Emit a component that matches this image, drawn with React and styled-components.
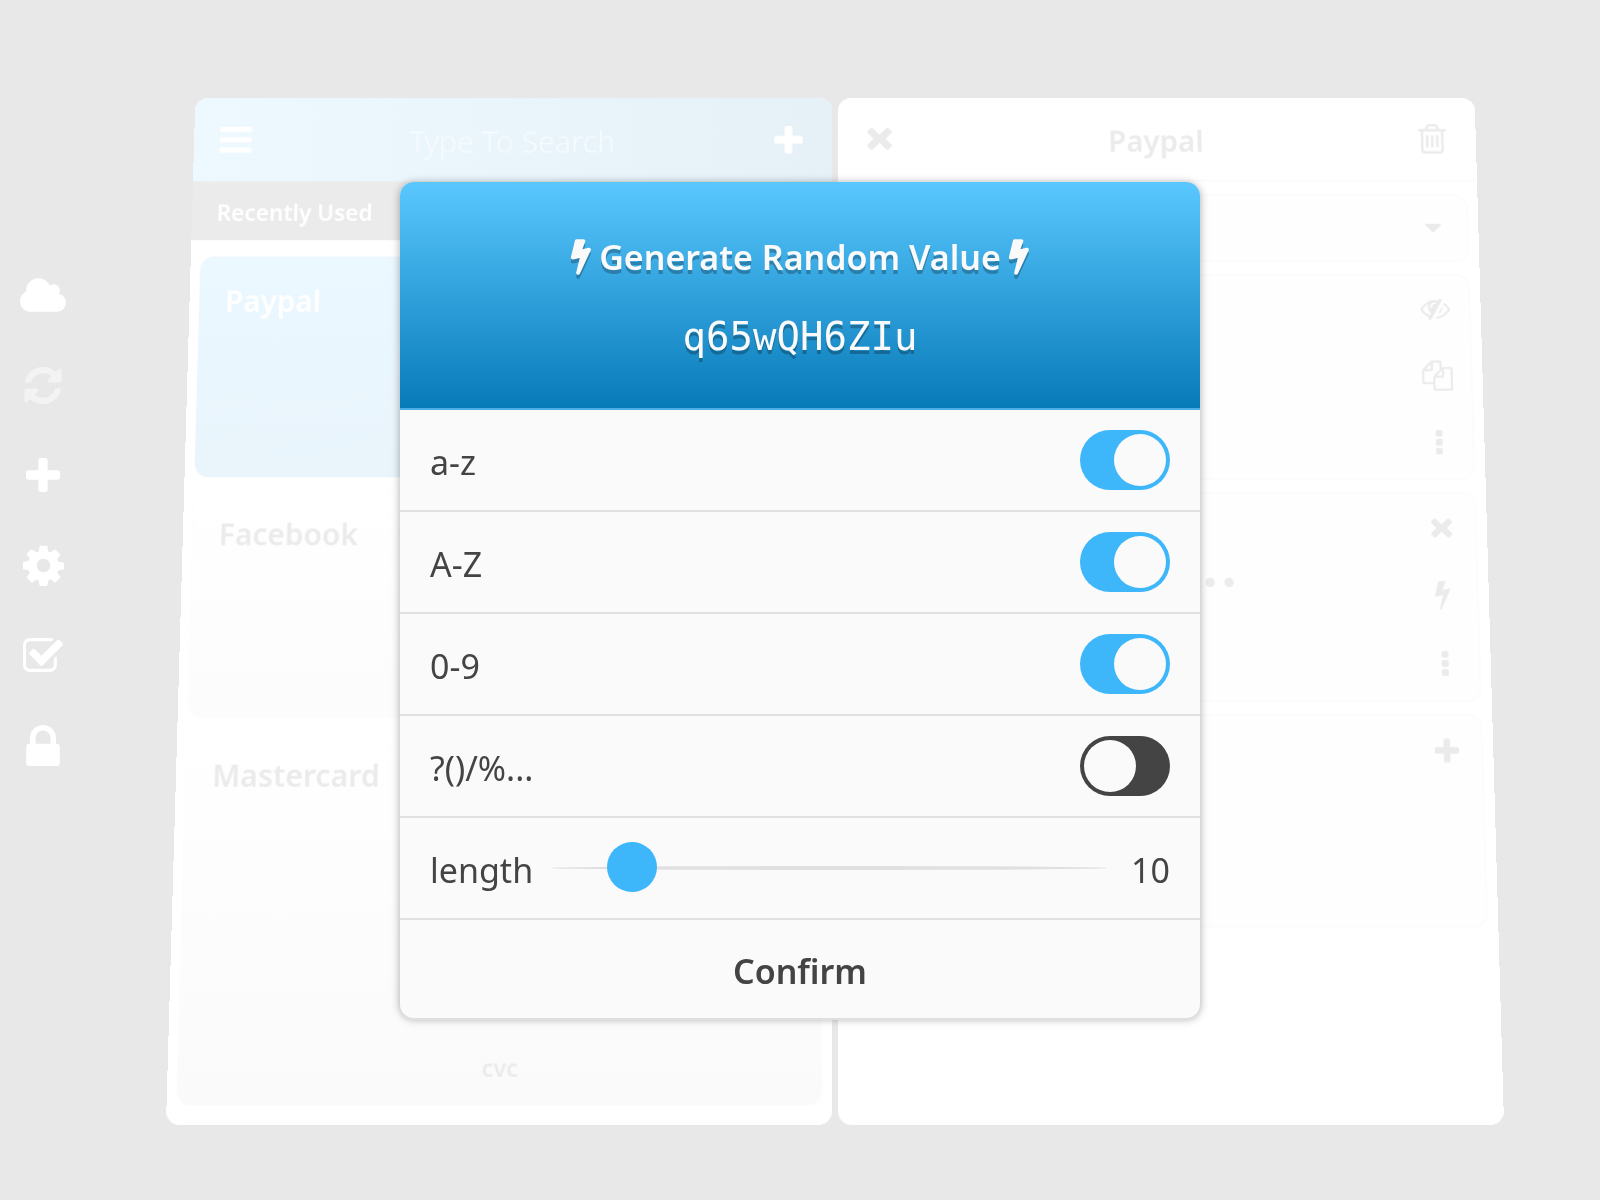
import React, { useState } from 'react';
import styled, { createGlobalStyle } from 'styled-components';

const ICONS = {
  bars: {
    box: '128 256 1536 1280',
    d: 'M1664 1344v128q0 26-19 45t-45 19H192q-26 0-45-19t-19-45v-128q0-26 19-45t45-19h1408q26 0 45 19t19 45zm0-512v128q0 26-19 45t-45 19H192q-26 0-45-19t-19-45V832q0-26 19-45t45-19h1408q26 0 45 19t19 45zm0-512v128q0 26-19 45t-45 19H192q-26 0-45-19t-19-45V320q0-26 19-45t45-19h1408q26 0 45 19t19 45z'
  },
  plus: {
    box: '0 192 1408 1408',
    d: 'M1408 800v192q0 40-28 68t-68 28H896v416q0 40-28 68t-68 28H608q-40 0-68-28t-28-68v-416H96q-40 0-68-28t-28-68V800q0-40 28-68t68-28h416V288q0-40 28-68t68-28h192q40 0 68 28t28 68v416h416q40 0 68 28t28 68z'
  },
  times: {
    box: '10 366 1288 1188',
    d: 'M1298 1322q0 40-28 68l-136 136q-28 28-68 28t-68-28l-344-344-344 344q-28 28-68 28t-68-28L38 1390q-28-28-28-68t28-68l294-294L38 666q-28-28-28-68t28-68l136-136q28-28 68-28t68 28l344 344 344-344q28-28 68-28t68 28l136 136q28 28 28 68t-28 68l-294 294 294 294q28 28 28 68z'
  },
  cloud: {
    box: '64 128 1920 1408',
    d: 'M1984 1152q0 159-112.500 271.500T1600 1536H512q-185 0-316.500-131.500T64 1088q0-132 71-241.500T322 683q-2-28-2-43 0-212 150-362t362-150q158 0 286.500 88T1306 446q70-62 166-62 106 0 181 75t75 181q0 75-41 138 129 30 213 134.500t84 239.500z'
  },
  refresh: {
    box: '128 128 1536 1536',
    d: 'M1639 1056q0 5-1 7-64 268-268 434.500T892 1664q-146 0-282.500-55T366 1452l-129 129q-19 19-45 19t-45-19-19-45v-448q0-26 19-45t45-19h448q26 0 45 19t19 45-19 45l-137 137q71 66 161 102t187 36q134 0 250-65t186-179q11-17 53-117 8-23 30-23h192q13 0 22.500 9.500t9.500 22.500zm25-800v448q0 26-19 45t-45 19h-448q-26 0-45-19t-19-45 19-45l138-138Q1097 384 896 384q-134 0-250 65T460 628q-11 17-53 117-8 23-30 23H178q-13 0-22.500-9.500T146 736v-7q65-268 270-434.500T896 128q146 0 284 55.500T1425 340l130-129q19-19 45-19t45 19 19 45z'
  },
  cog: {
    box: '128 128 1536 1536',
    d: 'M1152 896q0-106-75-181t-181-75-181 75-75 181 75 181 181 75 181-75 75-181zm512-109v222q0 12-8 23t-20 13l-185 28q-19 54-39 91 35 50 107 138 10 12 10 25t-9 23q-27 37-99 108t-94 71q-12 0-26-9l-138-108q-44 23-91 38-16 136-29 186-7 28-36 28H785q-14 0-24.500-8.500T749 1642l-28-184q-49-16-90-37l-141 107q-10 9-25 9-14 0-25-11-126-114-165-168-7-10-7-23 0-12 8-23 15-21 51-66.500t54-70.500q-27-50-41-99l-183-27q-13-2-21-12.500t-8-23.500V791q0-12 8-23t19-13l186-28q14-46 39-92-40-57-107-138-10-12-10-24 0-10 9-23 26-36 98.500-107.500T465 294q13 0 26 10l138 107q44-23 91-38 16-136 29-186 7-28 36-28h222q14 0 24.500 8.500T1043 189l28 184q49 16 90 37l142-107q9-9 24-9 13 0 25 10 129 119 165 170 7 8 7 22 0 12-8 23-15 21-51 66.500t-54 70.500q26 50 41 98l183 28q13 2 21 12.500t8 23.500z'
  },
  check: {
    box: '64 128 1664 1408',
    d: 'M1472 930v318q0 119-84.500 203.500T1184 1536H352q-119 0-203.500-84.500T64 1248V416q0-119 84.500-203.500T352 128h832q63 0 117 25 15 7 18 23 3 17-9 29l-49 49q-10 10-23 10-3 0-9-2-23-6-45-6H352q-66 0-113 47t-47 113v832q0 66 47 113t113 47h832q66 0 113-47t47-113V994q0-13 9-22l64-64q10-10 23-10 6 0 12 3 20 8 20 29zm231-489L889 1255q-24 24-57 24t-57-24L345 825q-24-24-24-57t24-57l110-110q24-24 57-24t57 24l263 263 647-647q24-24 57-24t57 24l110 110q24 24 24 57t-24 57z'
  },
  lock: {
    box: '320 128 1152 1408',
    d: 'M640 768h512V576q0-106-75-181t-181-75-181 75-75 181v192zm832 96v576q0 40-28 68t-68 28H416q-40 0-68-28t-28-68V864q0-40 28-68t68-28h32V576q0-184 132-316t316-132 316 132 132 316v192h32q40 0 68 28t28 68z'
  },
  bolt: {
    box: '456 128 892 1664',
    d: 'M1333 566q18 20 7 44l-540 1157q-13 25-42 25-4 0-14-2-17-5-25.500-19t-4.500-30l197-808-406 101q-4 1-12 1-18 0-31-11-18-15-13-39l201-825q4-14 16-23t28-9h328q19 0 32 12.500t13 29.500q0 8-5 18l-171 463 396-98q8-2 12-2 19 0 34 15z'
  },
  trash: {
    box: '192 128 1408 1536',
    d: 'M704 736v576q0 14-9 23t-23 9h-64q-14 0-23-9t-9-23V736q0-14 9-23t23-9h64q14 0 23 9t9 23zm256 0v576q0 14-9 23t-23 9h-64q-14 0-23-9t-9-23V736q0-14 9-23t23-9h64q14 0 23 9t9 23zm256 0v576q0 14-9 23t-23 9h-64q-14 0-23-9t-9-23V736q0-14 9-23t23-9h64q14 0 23 9t9 23zm128 724V512H448v948q0 22 7 40.500t14.500 27 10.500 8.500h832q3 0 10.500-8.500t14.500-27 7-40.500zM672 384h448l-48-117q-7-9-17-11H738q-10 2-17 11zm928 32v64q0 14-9 23t-23 9h-96v948q0 83-47 143.500t-113 60.500H480q-66 0-113-58.500T320 1464V512h-96q-14 0-23-9t-9-23v-64q0-14 9-23t23-9h309l70-167q15-37 54-63t79-26h320q40 0 79 26t54 63l70 167h309q14 0 23 9t9 23z'
  },
  caret: {
    box: '384 640 1024 576',
    d: 'M1408 704q0 26-19 45l-448 448q-19 19-45 19t-45-19L403 749q-19-19-19-45t19-45 45-19h896q26 0 45 19t19 45z'
  },
  eye: {
    box: '0 288 1792 1344',
    d: 'M555 1335l78-141q-87-63-136-159t-49-203q0-121 61-225-229 117-381 353 167 258 427 375zm389-759q0-20-14-34t-34-14q-125 0-214.500 89.500T592 832q0 20 14 34t34 14 34-14 14-34q0-86 61-147t147-61q20 0 34-14t14-34zm363-191q0 7-1 9-106 189-316 567t-315 566l-49 89q-10 16-28 16-12 0-134-70-16-10-16-28 0-12 44-87-143-65-263.500-173T20 1029Q0 998 0 960t20-69q153-235 380-371t496-136q89 0 180 17l54-97q10-16 28-16 5 0 18 6t31 15.500 33 18.500 31.500 18.500T1291 358q16 10 16 27zm37 447q0 139-79 253.500T1056 1250l280-502q8 45 8 84zm448 128q0 35-20 69-39 64-109 145-150 172-347.500 267T896 1536l74-132q212-18 392.500-137T1664 960q-115-179-282-294l63-112q95 64 182.500 153T1772 891q20 34 20 69z'
  },
  copy: {
    box: '0 0 1792 1792',
    d: 'M1696 384q40 0 68 28t28 68v1216q0 40-28 68t-68 28h-960q-40 0-68-28t-28-68v-288h-544q-40 0-68-28t-28-68v-672q0-40 20-88t48-76l408-408q28-28 76-48t88-20h416q40 0 68 28t28 68v328q68-40 128-40h416zm-544 213l-299 299h299v-299zm-640-384l-299 299h299v-299zm196 647l316-316v-416h-384v416q0 40-28 68t-68 28h-416v640h512v-256q0-40 20-88t48-76zm956 804v-1152h-384v416q0 40-28 68t-68 28h-416v640h896z'
  },
  dots: {
    box: '0 0 384 1408',
    d: 'M96 0h192q96 0 96 96v192q0 96-96 96H96q-96 0-96-96V96Q0 0 96 0zm0 512h192q96 0 96 96v192q0 96-96 96H96q-96 0-96-96V608q0-96 96-96zm0 512h192q96 0 96 96v192q0 96-96 96H96q-96 0-96-96v-192q0-96 96-96z'
  }
};

const Icon = ({ name, width, height }) => (
  <svg width={width} height={height} viewBox={ICONS[name].box} fill="currentColor" aria-hidden="true">
    <path d={ICONS[name].d} />
  </svg>
);

// heavier bolt for the bold dialog title
const TitleBolt = () => (
  <svg
    width={20}
    height={36}
    viewBox="406 78 992 1764"
    fill="currentColor"
    stroke="currentColor"
    strokeWidth="100"
    strokeLinejoin="round"
    aria-hidden="true"
  >
    <path d={ICONS.bolt.d} />
  </svg>
);

const navItems = [
  { label: 'Cloud', icon: 'cloud', width: 46, height: 34 },
  { label: 'Sync', icon: 'refresh', width: 38, height: 37, faded: true },
  { label: 'Add', icon: 'plus', width: 34, height: 34 },
  { label: 'Settings', icon: 'cog', width: 41, height: 41 },
  { label: 'Select', icon: 'check', width: 40, height: 34 },
  { label: 'Lock', icon: 'lock', width: 34, height: 41 }
];

const charsets = [
  { id: 'lower', label: 'a-z' },
  { id: 'upper', label: 'A-Z' },
  { id: 'digits', label: '0-9' },
  { id: 'symbols', label: '?()/%...' }
];

const App = () => {
  const [enabled, setEnabled] = useState({ lower: true, upper: true, digits: true, symbols: false });
  const [length, setLength] = useState(10);

  const toggle = (id) => {
    setEnabled(prev => ({ ...prev, [id]: !prev[id] }));
  };

  return (
    <Shell>
      <GlobalStyle />
      <Sidebar>
        {navItems.map(item => (
          <NavButton key={item.icon} aria-label={item.label} $faded={item.faded}>
            <Icon name={item.icon} width={item.width} height={item.height} />
          </NavButton>
        ))}
      </Sidebar>

      <Main>
        <Stage>
          <Panel>
            <SearchHeader>
              <IconButton aria-label="Menu"><Icon name="bars" width={33} height={27} /></IconButton>
              <SearchInput aria-label="Search" placeholder="Type To Search" />
              <IconButton aria-label="New card"><Icon name="plus" width={29} height={29} /></IconButton>
            </SearchHeader>
            <SectionTitle>Recently Used</SectionTitle>
            <CardList>
              <Card $active $height={226}><CardName>Paypal</CardName></Card>
              <Card $height={229}><CardName>Facebook</CardName></Card>
              <Card $height={367}>
                <CardName>Mastercard</CardName>
                <CardField>cvc</CardField>
              </Card>
            </CardList>
          </Panel>

          <Panel>
            <DetailHeader>
              <IconButton aria-label="Close"><Icon name="times" width={25} height={25} /></IconButton>
              <DetailTitle>Paypal</DetailTitle>
              <IconButton aria-label="Delete"><Icon name="trash" width={29} height={31} /></IconButton>
            </DetailHeader>
            <FieldList>
              <Field $height={71}>
                <Actions>
                  <ActionButton aria-label="Expand"><Icon name="caret" width={16} height={9} /></ActionButton>
                </Actions>
              </Field>
              <Field $height={211}>
                <Actions>
                  <ActionButton aria-label="Hide"><Icon name="eye" width={30} height={23} /></ActionButton>
                  <ActionButton aria-label="Copy"><Icon name="copy" width={31} height={31} /></ActionButton>
                  <ActionButton aria-label="More"><Icon name="dots" width={7} height={25} /></ActionButton>
                </Actions>
              </Field>
              <Field $height={211}>
                <Secret type="password" aria-label="Password" defaultValue="q65wQH6ZIu42" />
                <Actions>
                  <ActionButton aria-label="Clear"><Icon name="times" width={21} height={21} /></ActionButton>
                  <ActionButton aria-label="Generate"><Icon name="bolt" width={16} height={29} /></ActionButton>
                  <ActionButton aria-label="More"><Icon name="dots" width={7} height={25} /></ActionButton>
                </Actions>
              </Field>
              <Field $height={211}>
                <Actions>
                  <ActionButton aria-label="Add field"><Icon name="plus" width={24} height={24} /></ActionButton>
                </Actions>
              </Field>
            </FieldList>
          </Panel>
        </Stage>
      </Main>

      <Overlay>
        <Modal role="dialog" aria-labelledby="generator-title">
          <ModalHeader>
            <ModalTitle id="generator-title">
              <TitleBolt />
              Generate Random Value
              <TitleBolt />
            </ModalTitle>
            <Value>q65wQH6ZIu</Value>
          </ModalHeader>
          {charsets.map(set => (
            <Row key={set.id}>
              <RowLabel htmlFor={set.id}>{set.label}</RowLabel>
              <Switch
                id={set.id}
                type="checkbox"
                checked={enabled[set.id]}
                onChange={() => toggle(set.id)}
              />
            </Row>
          ))}
          <Row>
            <RowLabel htmlFor="length">length</RowLabel>
            <Slider
              id="length"
              type="range"
              min="5"
              max="50"
              value={length}
              onChange={e => setLength(Number(e.target.value))}
            />
            <Count htmlFor="length">{length}</Count>
          </Row>
          <ConfirmButton>Confirm</ConfirmButton>
        </Modal>
      </Overlay>
    </Shell>
  );
};

const GlobalStyle = createGlobalStyle`
  * {
    box-sizing: border-box;
  }

  body {
    margin: 0;
    background: #e8e8e8;
    font-family: 'Noto Sans', sans-serif;
  }

  button, input {
    margin: 0;
    padding: 0;
    border: none;
    background: none;
    color: inherit;
    font: inherit;
  }

  button {
    cursor: pointer;
  }

  svg {
    display: block;
    flex: none;
  }
`;

const Shell = styled.div`
  display: flex;
  min-height: 100vh;
  overflow: hidden;
`;

const Sidebar = styled.nav`
  display: flex;
  flex-direction: column;
  flex: none;
  width: 86px;
  padding-top: 250px;
`;

const NavButton = styled.button`
  display: flex;
  align-items: center;
  justify-content: center;
  height: 90px;
  color: ${props => props.$faded ? '#f3f3f3' : '#fff'};
`;

const Main = styled.main`
  display: flex;
  flex: 1;
  padding: 85px 111px 85px 95px;
`;

const Stage = styled.div`
  display: grid;
  grid-template-columns: 1fr 1fr;
  gap: 6px;
  flex: 1;
  outline: 1px solid transparent;
  transform: perspective(2000px) rotateX(5deg);
`;

const Panel = styled.section`
  background: #fff;
  border-radius: 13px;
  overflow: hidden;
`;

const PanelHeader = styled.header`
  display: flex;
  align-items: center;
  height: 87px;
  padding: 0 28px 0 26px;
  font-size: 30px;
`;

const SearchHeader = styled(PanelHeader)`
  background: linear-gradient(to right, #edf9ff, #e5f0f7);
  color: #fff;
`;

const DetailHeader = styled(PanelHeader)`
  border-bottom: 2px solid #fbfbfb;
  color: #ebebeb;
`;

const IconButton = styled.button`
  display: flex;
  align-items: center;
  justify-content: center;
  width: 33px;
  height: 48px;
`;

const SearchInput = styled.input`
  flex: 1;
  min-width: 0;
  padding-top: 3px;
  text-align: center;
  font-size: 31px;
  font-weight: 300;

  &::placeholder {
    color: #f6fbfe;
    opacity: 1;
  }
`;

const DetailTitle = styled.h2`
  flex: 1;
  margin: 0;
  padding-top: 3px;
  text-align: center;
  font-size: 30px;
  font-weight: 600;
`;

const SectionTitle = styled.h3`
  margin: 0;
  padding: 3px 25px 0;
  background: #ebebeb;
  color: #fff;
  font-size: 23px;
  font-weight: 600;
  line-height: 58px;
`;

const CardList = styled.div`
  display: grid;
  gap: 12px;
  padding: 17px 10px 0;
`;

const Card = styled.article`
  display: flex;
  flex-direction: column;
  justify-content: space-between;
  height: ${props => props.$height}px;
  padding: 26px 26px 18px;
  border-radius: 14px;
  background: ${props => props.$active
    ? 'linear-gradient(#ebf8ff, #e9f4fb)'
    : 'linear-gradient(#fff, #fafafa 367px)'};
  box-shadow: 0 0 2px #f8f8f8;
  color: ${props => props.$active ? '#fff' : '#ebebeb'};
`;

const CardName = styled.h4`
  margin: 0;
  font-size: 30px;
  font-weight: 600;
  line-height: 40px;
`;

const CardField = styled.span`
  text-align: center;
  font-size: 23px;
  font-weight: 600;
  line-height: 36px;
`;

const FieldList = styled.div`
  display: grid;
  gap: 12px;
  padding: 13px 10px 0;
`;

const Field = styled.div`
  display: flex;
  justify-content: flex-end;
  height: ${props => props.$height}px;
  border: 2px solid #fcfcfc;
  border-radius: 14px;
  background: #fefefe;
  color: #ebebeb;
`;

const Actions = styled.div`
  display: flex;
  flex-direction: column;
  width: 68px;
`;

const ActionButton = styled.button`
  display: flex;
  align-items: center;
  justify-content: center;
  height: 68px;
`;

const Secret = styled.input`
  flex: 1;
  min-width: 0;
  height: 180px;
  padding-right: 8px;
  text-align: center;
  font-family: 'DejaVu Sans', sans-serif;
  font-size: 32px;
`;

const Overlay = styled.div`
  position: fixed;
  inset: 0;
  display: flex;
  align-items: center;
  justify-content: center;
`;

const Modal = styled.div`
  width: 50%;
  border-radius: 14px;
  background: #fafafa;
  box-shadow: 0 2px 0 #dfdfdf, 0 1px 8px rgba(0, 0, 0, 0.35);
  color: #444;
  font-size: 34px;
  overflow: hidden;
`;

const ModalHeader = styled.header`
  display: flex;
  flex-direction: column;
  align-items: center;
  height: 228px;
  padding-top: 45px;
  border-bottom: 2px solid #4baee6;
  background: linear-gradient(#5ac8ff, #077ab8) padding-box;
  color: #fafafa;
`;

const ModalTitle = styled.h1`
  display: flex;
  align-items: center;
  gap: 8px;
  margin: 0 0 26px;
  font-size: 34px;
  font-weight: 600;
  line-height: 60px;
  text-shadow: 0 4px 0 rgba(0, 0, 0, 0.25);

  svg {
    filter: drop-shadow(0 4px 0 rgba(0, 0, 0, 0.25));
  }
`;

const Value = styled.output`
  font-family: 'DejaVu Sans Mono', monospace;
  font-size: 39px;
  line-height: 48px;
  text-shadow: 0 4px 0 rgba(0, 0, 0, 0.25);
`;

const Row = styled.div`
  display: flex;
  align-items: center;
  justify-content: space-between;
  gap: 18px;
  height: 102px;
  padding: 0 30px;
  border-bottom: 2px solid #e0e0e0;
`;

const RowLabel = styled.label`
  padding-top: 3px;
`;

const Switch = styled.input`
  appearance: none;
  display: flex;
  width: 90px;
  height: 60px;
  padding: 4px;
  border-radius: 30px;
  background: #444;
  cursor: pointer;

  &::before {
    content: '';
    width: 52px;
    height: 52px;
    border-radius: 50%;
    background: #fafafa;
  }

  &:checked {
    justify-content: flex-end;
    background: #3db6fa;
  }
`;

const Slider = styled.input`
  appearance: none;
  flex: 1;
  min-width: 0;
  height: 50px;
  cursor: pointer;

  &::-webkit-slider-runnable-track {
    height: 4px;
    border-radius: 50%;
    background: #e0e0e0;
  }

  &::-webkit-slider-thumb {
    appearance: none;
    width: 50px;
    height: 50px;
    margin-top: -24px;
    border-radius: 50%;
    background: #3db6fa;
  }
`;

const Count = styled.output`
  width: 45px;
  padding-top: 3px;
  text-align: right;
`;

const ConfirmButton = styled.button`
  display: block;
  width: 100%;
  height: 98px;
  padding-top: 3px;
  font-weight: 600;
`;

export default App;
